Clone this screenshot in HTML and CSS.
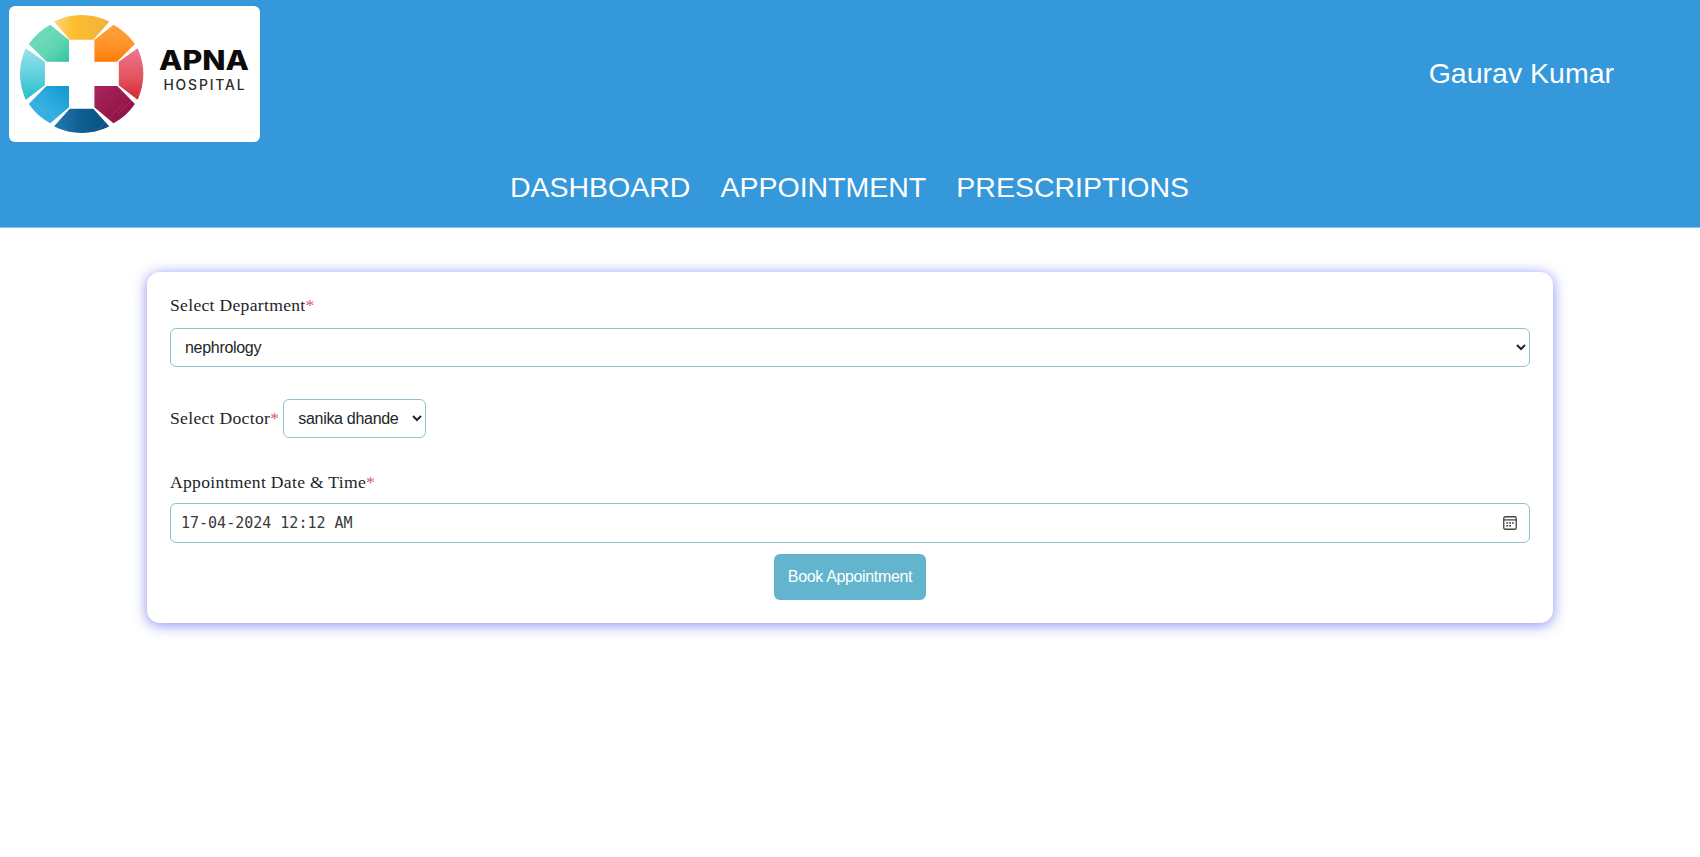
FILE: index.html
```html
<!DOCTYPE html>
<html lang="en">

<head>
    <meta charset="UTF-8">
    <meta name="viewport" content="width=device-width, initial-scale=1.0">
    <title>Apna Hospital - Book Appointment</title>
    <link rel="stylesheet" href="styles.css">
</head>

<body>
    <header class="topbar">
        <div class="topbar-row">
            <div class="logo-card">
                <svg class="logo" viewBox="27 15 755 412" aria-label="Apna Hospital logo">
                    <defs>
                        <linearGradient id="gYellow" x1="0" x2="1" y1="0" y2="0">
                            <stop offset="0" stop-color="#fbd478"/>
                            <stop offset="0.35" stop-color="#fdbd2f"/>
                            <stop offset="1" stop-color="#efb23a"/>
                        </linearGradient>
                        <linearGradient id="gOrange" x1="0" x2="0" y1="0" y2="1">
                            <stop offset="0" stop-color="#ff9f3d"/>
                            <stop offset="0.55" stop-color="#ff9326"/>
                            <stop offset="1" stop-color="#fb7d06"/>
                        </linearGradient>
                        <linearGradient id="gRed" x1="0" x2="0" y1="0" y2="1">
                            <stop offset="0" stop-color="#ef7389"/>
                            <stop offset="0.6" stop-color="#e3525f"/>
                            <stop offset="1" stop-color="#d3262f"/>
                        </linearGradient>
                        <linearGradient id="gMaroon" x1="0" x2="1" y1="0" y2="1">
                            <stop offset="0" stop-color="#a9245b"/>
                            <stop offset="1" stop-color="#8a0e40"/>
                        </linearGradient>
                        <linearGradient id="gNavy" x1="0" x2="1" y1="0" y2="0">
                            <stop offset="0" stop-color="#2276aa"/>
                            <stop offset="0.5" stop-color="#0f5f93"/>
                            <stop offset="1" stop-color="#084f80"/>
                        </linearGradient>
                        <linearGradient id="gBlue" x1="1" x2="0" y1="0" y2="1">
                            <stop offset="0" stop-color="#0f99cf"/>
                            <stop offset="0.5" stop-color="#30ace0"/>
                            <stop offset="1" stop-color="#3cb2e2"/>
                        </linearGradient>
                        <linearGradient id="gTeal" x1="0" x2="0" y1="0" y2="1">
                            <stop offset="0" stop-color="#97e0ea"/>
                            <stop offset="0.55" stop-color="#5dcfdb"/>
                            <stop offset="1" stop-color="#28bdcb"/>
                        </linearGradient>
                        <linearGradient id="gGreen" x1="0" x2="1" y1="0" y2="1">
                            <stop offset="0" stop-color="#74dcbd"/>
                            <stop offset="0.6" stop-color="#62d6b4"/>
                            <stop offset="1" stop-color="#33c59e"/>
                        </linearGradient>
                    </defs>
                    <path fill="url(#gYellow)" stroke="url(#gYellow)" class="seg" d="M164 63 A182 182 0 0 1 325 63 L279 115 L209 115 Z"/>
                    <path fill="url(#gOrange)" stroke="url(#gOrange)" class="seg" d="M341 74 A185 185 0 0 1 403 130 L351 182 L285 182 L285 119 Z"/>
                    <path fill="url(#gRed)" stroke="url(#gRed)" class="seg" d="M413 146 A188 188 0 0 1 413 296 L359 254 L359 185 Z"/>
                    <path fill="url(#gMaroon)" stroke="url(#gMaroon)" class="seg" d="M403 312 A185 185 0 0 1 341 368 L285 321 L285 259 L351 259 Z"/>
                    <path fill="url(#gNavy)" stroke="url(#gNavy)" class="seg" d="M325 379 A182 182 0 0 1 164 379 L209 328 L279 328 Z"/>
                    <path fill="url(#gBlue)" stroke="url(#gBlue)" class="seg" d="M149 368 A185 185 0 0 1 87 312 L139 259 L204 259 L204 321 Z"/>
                    <path fill="url(#gTeal)" stroke="url(#gTeal)" class="seg" d="M76 296 A188 188 0 0 1 76 146 L131 185 L131 254 Z"/>
                    <path fill="url(#gGreen)" stroke="url(#gGreen)" class="seg" d="M87 130 A185 185 0 0 1 149 74 L204 119 L204 182 L139 182 Z"/>
                    <path class="facets" d="M208 42 L120 130 M283 42 L370 130 M208 400 L120 312 M283 400 L370 312 M55 180 L135 100 M435 180 L355 100 M55 262 L135 342 M435 262 L355 342"/>
                    <text class="logo-name" x="479" y="208" textLength="272" lengthAdjust="spacingAndGlyphs">APNA</text>
                    <text class="logo-sub" x="492" y="270" textLength="246" lengthAdjust="spacing">HOSPITAL</text>
                </svg>
            </div>
            <div class="user-name">Gaurav Kumar</div>
        </div>
        <nav class="main-nav">
            <a href="#">DASHBOARD</a>
            <a href="#">APPOINTMENT</a>
            <a href="#">PRESCRIPTIONS</a>
        </nav>
    </header>

    <main class="form-card">
        <form>
            <div class="field">
                <label class="field-label" for="department">Select Department<span class="required">*</span></label>
                <select class="control" id="department">
                    <option>nephrology</option>
                </select>
            </div>

            <div class="field-inline">
                <label class="field-label" for="doctor">Select Doctor<span class="required">*</span></label>
                <select class="control control-auto" id="doctor">
                    <option>sanika dhande</option>
                </select>
            </div>

            <div class="field field-date">
                <label class="field-label" for="date">Appointment Date &amp; Time<span class="required">*</span></label>
                <div class="date-wrap">
                    <input class="control date-input" id="date" type="text" value="17-04-2024 12:12 AM">
                    <svg class="date-icon" viewBox="0 0 14 14" aria-hidden="true">
                        <rect x="0.75" y="0.75" width="12.5" height="12.5" rx="1.6" fill="none" stroke="#444" stroke-width="1.3"/>
                        <path d="M1 3.9H13" stroke="#444" stroke-width="1.3"/>
                        <path d="M3.4 6.3H5.2V7.8H3.4ZM6.2 6.3H8V7.8H6.2ZM9 6.3H10.7V7.8H9ZM3.4 8.9H5.2V10.4H3.4ZM6.2 8.9H8V10.4H6.2Z" fill="#444"/>
                    </svg>
                </div>
            </div>

            <div class="actions">
                <button class="book-button" type="button">Book Appointment</button>
            </div>
        </form>
    </main>
</body>

</html>
```

FILE: styles.css
```css
* {
    margin: 0;
    padding: 0;
    box-sizing: border-box;
}

body {
    font-family: 'Liberation Sans', Arial, sans-serif;
    background: #fff;
    color: #212529;
    min-height: 100vh;
}

.topbar {
    background: #3498db;
    height: 228px;
    padding: 6px 86px 0 9px;
    border-bottom: 1px solid #8cc5ea;
}

.topbar-row {
    display: flex;
    justify-content: space-between;
    align-items: center;
}

.logo-card {
    background: #fff;
    border-radius: 6px;
    width: 251px;
    height: 136px;
}

.logo {
    display: block;
    width: 251px;
    height: 136px;
}

.seg {
    stroke-width: 4;
    stroke-linejoin: round;
}

.facets {
    fill: none;
    stroke: #fff;
    stroke-width: 1.5;
    opacity: 0.25;
}

.logo-name {
    font-family: Inter, 'Liberation Sans', sans-serif;
    font-weight: 800;
    font-size: 80px;
    fill: #0b0b0b;
}

.logo-sub {
    font-family: Inter, 'Liberation Sans', sans-serif;
    font-weight: 500;
    font-size: 42px;
    fill: #2b2b2b;
}

.user-name {
    color: #fff;
    font-size: 28.5px;
    position: relative;
    top: -1px;
}

.main-nav {
    display: flex;
    justify-content: center;
    gap: 30px;
    margin-top: 29px;
    padding-left: 76px;
}

.main-nav a {
    color: #fff;
    font-size: 28.5px;
    text-decoration: none;
}

.form-card {
    width: 1406px;
    margin: 44px auto 0;
    padding: 23px;
    background: #fff;
    border-radius: 13px;
    box-shadow: 0 2px 14px rgba(70, 80, 235, 0.65);
}

.field {
    margin-bottom: 32px;
}

.field-label {
    font-family: 'Liberation Serif', 'Times New Roman', serif;
    font-size: 17.6px;
    letter-spacing: 0.3px;
    line-height: 20px;
    color: #212529;
}

.required {
    color: #e05565;
}

.field .field-label {
    display: block;
    margin-bottom: 13px;
}

.field-inline {
    display: flex;
    align-items: center;
    gap: 4px;
    margin-bottom: 34px;
}

.field-inline .field-label {
    margin-bottom: 2px;
}

.control {
    display: block;
    width: 100%;
    height: 39px;
    padding: 0 10px;
    font-family: 'Liberation Sans', Arial, sans-serif;
    font-size: 16px;
    letter-spacing: -0.3px;
    color: #212529;
    background: #fff;
    border: 1px solid #8cc3ce;
    border-radius: 6px;
}

.control-auto {
    width: 143px;
}

.date-wrap {
    position: relative;
}

.date-input {
    height: 40px;
    font-family: 'DejaVu Sans Mono', monospace;
    font-size: 15px;
    letter-spacing: 0;
    color: #3a3a3a;
}

.date-icon {
    position: absolute;
    top: 13px;
    right: 13px;
    width: 14px;
    height: 14px;
}

.field-date {
    margin-bottom: 11px;
}

.field-date .field-label {
    margin-bottom: 11px;
}

.actions {
    display: flex;
    justify-content: center;
}

.book-button {
    width: 152px;
    height: 46px;
    background: #62b5cd;
    color: #fff;
    border: none;
    border-radius: 6px;
    font-family: 'Liberation Sans', Arial, sans-serif;
    font-size: 16px;
    letter-spacing: -0.35px;
    cursor: pointer;
}
```
